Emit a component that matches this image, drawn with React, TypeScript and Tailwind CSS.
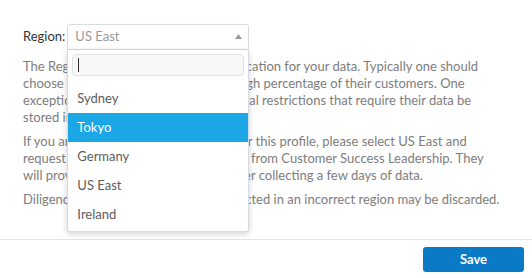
import React from "react";

const options = ["Sydney", "Tokyo", "Germany", "US East", "Ireland"];

export default function App() {
  return (
    <div
      className="w-[532px] h-[278px] bg-white flex flex-col overflow-hidden"
      style={{ fontFamily: "Lato, 'Open Sans', sans-serif" }}
    >
      <div className="h-[239px] px-[23px] pt-[24px] text-[13px] text-[#7d7d7d]">
        <div className="flex items-center gap-[2px]">
          <span className="text-[#333] text-[13px]">Region:</span>
          <div className="relative w-[182px]">
            <div className="h-[26px] border border-[#d5dce6] rounded-t-[3px] flex items-center justify-between pl-[7px] pr-[6px] bg-white">
              <span className="text-[#999] text-[13px]">US East</span>
              <svg width="7" height="5" viewBox="0 0 7 5" className="mt-[-1px]">
                <path d="M0 5 L3.5 0 L7 5 Z" fill="#9a9a9a" />
              </svg>
            </div>
            <div className="absolute left-0 top-[26px] w-[182px] bg-white border border-t-0 border-[#d5dce6] rounded-b-[3px] shadow-[0_2px_6px_rgba(0,0,0,0.18)] z-10 pt-[4px] pb-[2px]">
              <div className="mx-[4px] h-[22px] rounded-[4px] border border-[#dfe4ea] bg-[#f8f8f8] flex items-center pl-[5px]">
                <span className="w-px h-[14px] bg-[#333]" />
              </div>
              <div className="mt-[8px]">
                {options.map((o) => (
                  <div
                    key={o}
                    className={
                      o === "Tokyo"
                        ? "h-[29px] flex items-center pl-[9px] bg-[#1ba6e6] text-white text-[13px]"
                        : "h-[29px] flex items-center pl-[9px] text-[#5c5c5c] text-[13px]"
                    }
                  >
                    {o}
                  </div>
                ))}
              </div>
            </div>
          </div>
        </div>
        <p className="mt-[8px] leading-[17px] whitespace-nowrap">
          The Region setting picks the physical location for your data. Typically one should
          <br />
          choose a region which is nearest to a high percentage of their customers. One
          <br />
          exception is for customers that have legal restrictions that require their data be
          <br />
          stored in a specific region.
        </p>
        <p className="mt-[7px] leading-[17px] whitespace-nowrap">
          If you are unsure which region to use for this profile, please select US East and
          <br />
          request a recommendation and support from Customer Success Leadership. They
          <br />
          will provide you a recommendation, after collecting a few days of data.
        </p>
        <p className="mt-[7px] leading-[17px] whitespace-nowrap">
          Diligence is advised, because data collected in an incorrect region may be discarded.
        </p>
      </div>
      <div className="border-t border-[#e3e3e3] flex justify-end pr-[8px] pt-[7px]">
        <button className="w-[101px] h-[25px] rounded-[3px] bg-[#0a79c6] text-white text-[13px] font-bold">
          Save
        </button>
      </div>
    </div>
  );
}
